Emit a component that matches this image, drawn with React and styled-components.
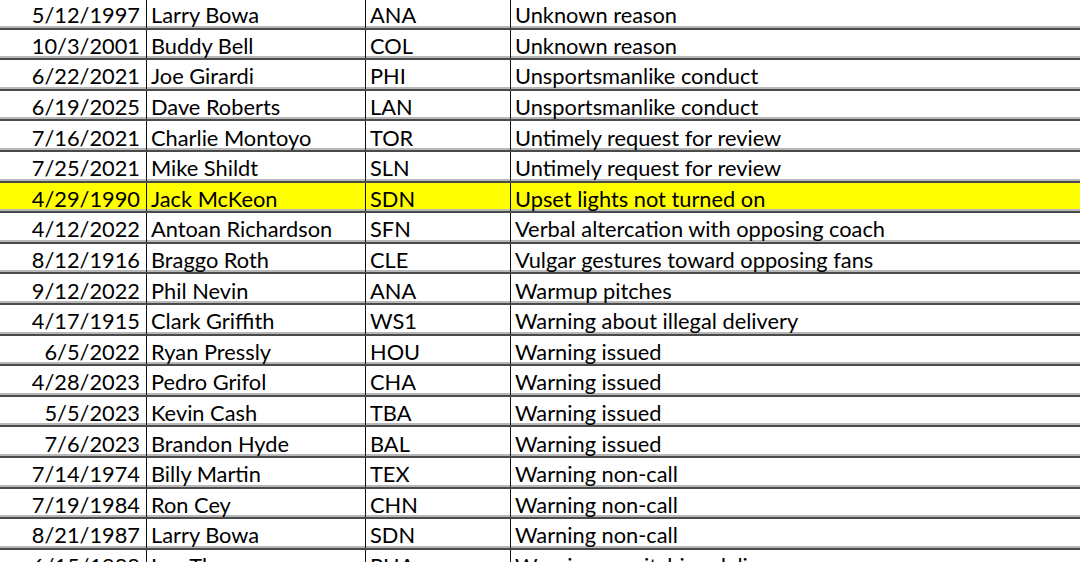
import React from 'react'
import styled, { createGlobalStyle } from 'styled-components'

const GlobalStyle = createGlobalStyle`
    html, body{
        margin: 0;
        padding: 0;
        background: #ffffff;
        overflow: hidden;
    }
`

const rows = [
    ['5/12/1997', 'Larry Bowa', 'ANA', 'Unknown reason'],
    ['10/3/2001', 'Buddy Bell', 'COL', 'Unknown reason'],
    ['6/22/2021', 'Joe Girardi', 'PHI', 'Unsportsmanlike conduct'],
    ['6/19/2025', 'Dave Roberts', 'LAN', 'Unsportsmanlike conduct'],
    ['7/16/2021', 'Charlie Montoyo', 'TOR', 'Untimely request for review'],
    ['7/25/2021', 'Mike Shildt', 'SLN', 'Untimely request for review'],
    ['4/29/1990', 'Jack McKeon', 'SDN', 'Upset lights not turned on', true],
    ['4/12/2022', 'Antoan Richardson', 'SFN', 'Verbal altercation with opposing coach'],
    ['8/12/1916', 'Braggo Roth', 'CLE', 'Vulgar gestures toward opposing fans'],
    ['9/12/2022', 'Phil Nevin', 'ANA', 'Warmup pitches'],
    ['4/17/1915', 'Clark Griffith', 'WS1', 'Warning about illegal delivery'],
    ['6/5/2022', 'Ryan Pressly', 'HOU', 'Warning issued'],
    ['4/28/2023', 'Pedro Grifol', 'CHA', 'Warning issued'],
    ['5/5/2023', 'Kevin Cash', 'TBA', 'Warning issued'],
    ['7/6/2023', 'Brandon Hyde', 'BAL', 'Warning issued'],
    ['7/14/1974', 'Billy Martin', 'TEX', 'Warning non-call'],
    ['7/19/1984', 'Ron Cey', 'CHN', 'Warning non-call'],
    ['8/21/1987', 'Larry Bowa', 'SDN', 'Warning non-call'],
    ['6/15/1988', 'Lee Thomas', 'PHA', 'Warning on pitching delivery'],
]

function App() {
    return (
        <>
            <GlobalStyle />
            <Sheet>
                {rows.map((r, i) => (
                    <Row key={i} $highlight={r[4]}>
                        <Cell $align="right">{r[0]}</Cell>
                        <Cell>{r[1]}</Cell>
                        <Cell>{r[2]}</Cell>
                        <Cell $last>{r[3]}</Cell>
                    </Row>
                ))}
            </Sheet>
        </>
    )
}

const Sheet = styled.div`
    width: 1080px;
    height: 563px;
    overflow: hidden;
    margin-top: -1px;
    font-family: Lato, "Open Sans", sans-serif;
    font-size: 21.8px;
    color: #000;
`

const Row = styled.div`
    display: grid;
    grid-template-columns: 147px 219px 145px 1fr;
    height: 30.6px;
    box-sizing: border-box;
    border-bottom: 2px solid #4a4a4a;
    box-shadow: inset 0 -2px 0 #b8b8b8;
    background: ${p => p.$highlight ? '#ffff00' : '#ffffff'};
`

const Cell = styled.div`
    display: flex;
    align-items: center;
    justify-content: ${p => p.$align === 'right' ? 'flex-end' : 'flex-start'};
    padding: 3px 6px 0 4px;
    border-right: ${p => p.$last ? 'none' : '1px solid #111'};
    white-space: nowrap;
    overflow: hidden;
`

export default App
